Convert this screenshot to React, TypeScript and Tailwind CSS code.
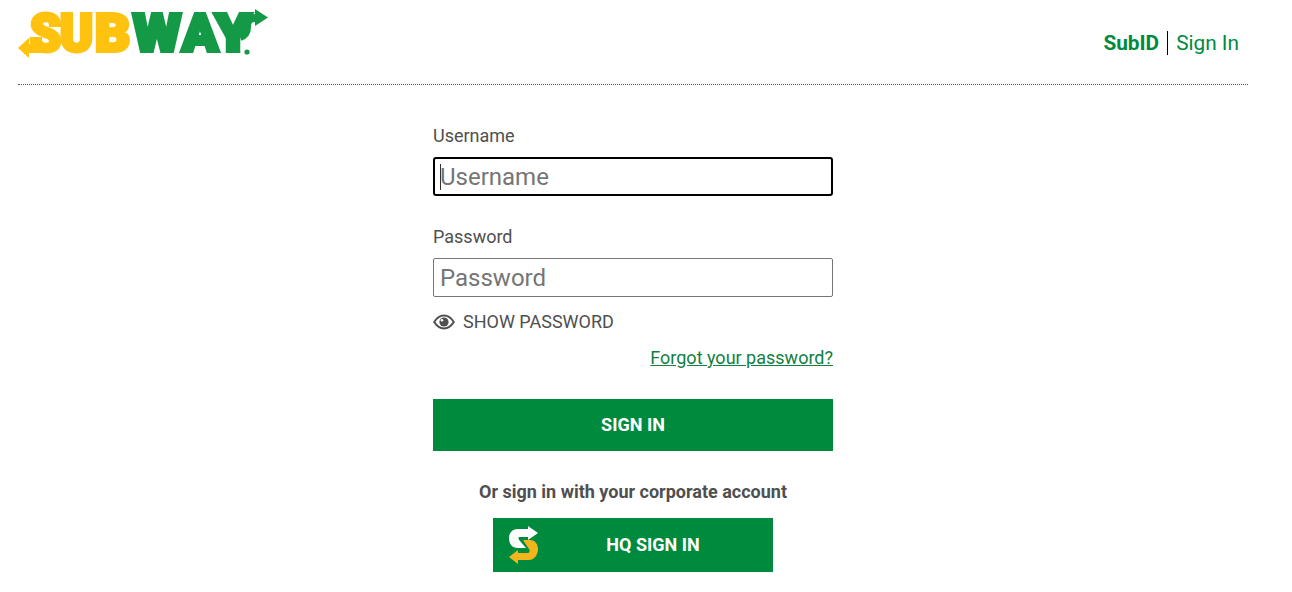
const roboto = { fontFamily: "Roboto, 'Liberation Sans', sans-serif" };

const letters = [
  { c: "S", x: 12, w: 31, fill: "#ffc20e" },
  { c: "U", x: 42, w: 33, fill: "#ffc20e" },
  { c: "B", x: 77, w: 35, fill: "#ffc20e" },
  { c: "W", x: 115, w: 48, fill: "#149a47" },
  { c: "A", x: 164, w: 36, fill: "#149a47" },
  { c: "Y", x: 197, w: 36, fill: "#149a47" },
];

function Logo() {
  return (
    <svg width="252" height="67" viewBox="0 -7 252 67" aria-label="Subway">
      {letters.map((l) => (
        <text
          key={l.c}
          x={l.x}
          y="44"
          textLength={l.w}
          lengthAdjust="spacingAndGlyphs"
          fontFamily="Roboto, sans-serif"
          fontWeight="900"
          fontSize="51"
          fill={l.fill}
          stroke={l.fill}
          strokeWidth="4"
        >
          {l.c}
        </text>
      ))}
      {/* left arrow */}
      <path d="M0 41 L11 31 V37 H26 V46 H11 V51 Z" fill="#ffc20e" />
      {/* right arrow, grows out of the Y */}
      <path d="M222 30 C228 28 229 24 229 20 C229 13 232 11 238 11 H240" fill="none" stroke="#149a47" strokeWidth="8" />
      <path d="M237 2 L250 10.5 L237 19 Z" fill="#149a47" />
      <circle cx="229" cy="45" r="2.6" fill="#149a47" />
    </svg>
  );
}

function SMark() {
  return (
    <svg width="38" height="46" viewBox="0 0 38 46" aria-hidden="true">
      <path d="M18 18 H25 C30 18 33 22 33 27 C33 33 29 38 24 38 H13 V42 L4 35 L13 28 V31 H23 C25 31 25 28 24 27 Z" fill="#f2b61c" />
      <path d="M23 7 H13 C7 7 4 11 4 16 C4 22 7 26 13 26 H21 L15 19 C13 17 13 15 15 15 H23 V18 L33 11 L23 4 Z" fill="#ffffff" />
    </svg>
  );
}

function EyeIcon() {
  return (
    <svg width="22" height="16" viewBox="0 0 22 16" aria-hidden="true">
      <path d="M1.2 8 C4 3.6 7.3 1.6 11 1.6 C14.7 1.6 18 3.6 20.8 8 C18 12.4 14.7 14.4 11 14.4 C7.3 14.4 4 12.4 1.2 8 Z" fill="none" stroke="#4f4f4f" strokeWidth="2" />
      <circle cx="11" cy="8" r="4.6" fill="#4f4f4f" />
      <circle cx="9" cy="6.2" r="1.3" fill="#ffffff" />
    </svg>
  );
}

export default function App() {
  return (
    <div className="w-[1266px] h-[592px] px-[18px] bg-white text-[#4f4f4f]" style={roboto}>
      <header className="h-[85px] flex justify-between border-b border-dotted border-[#555]">
        <Logo />
        <nav className="flex items-center h-[24px] mt-[31px] mr-[9px] text-[20.8px] text-[#008a3e]">
          <span className="font-bold pr-2 border-r border-black leading-[24px]">SubID</span>
          <a className="pl-2 leading-[24px]">Sign In</a>
        </nav>
      </header>

      <main className="w-[400px] mx-auto pt-[40px]">
        <label className="block text-[18px] leading-[22px]">Username</label>
        <div className="relative mt-[10px]">
          <input
            readOnly
            placeholder="Username"
            className="block w-full h-[39px] px-[5px] text-[24px] rounded-[3px] border-2 border-black outline-none placeholder:text-[#757575]"
          />
          <span className="absolute left-[7px] top-[7px] w-px h-[26px] bg-[#333]" />
        </div>

        <label className="block text-[18px] leading-[22px] mt-[30px]">Password</label>
        <input
          readOnly
          placeholder="Password"
          className="block w-full h-[39px] mt-[10px] px-[6px] text-[24px] rounded-[2px] border border-[#767676] outline-none placeholder:text-[#757575]"
        />

        <div className="flex items-center gap-[8px] mt-[14px] h-[21px]">
          <EyeIcon />
          <span className="text-[18px] leading-[21px]">SHOW PASSWORD</span>
        </div>

        <div className="flex justify-end mt-[15px]">
          <a className="text-[18px] leading-[22px] underline text-[#12803f]">Forgot your password?</a>
        </div>

        <button className="block w-full h-[52px] pb-[2px] mt-[30px] bg-[#008a3e] text-white font-bold text-[18px]">
          SIGN IN
        </button>

        <p className="mt-[30px] text-center font-bold text-[18px] leading-[22px]">
          Or sign in with your corporate account
        </p>

        <button className="relative flex items-center justify-center w-[280px] h-[54px] mx-auto mt-[15px] pl-[40px] pb-[2px] bg-[#008a3e] text-white font-bold text-[18px]">
          <span className="absolute left-[12px] top-[4px]">
            <SMark />
          </span>
          HQ SIGN IN
        </button>
      </main>
    </div>
  );
}
